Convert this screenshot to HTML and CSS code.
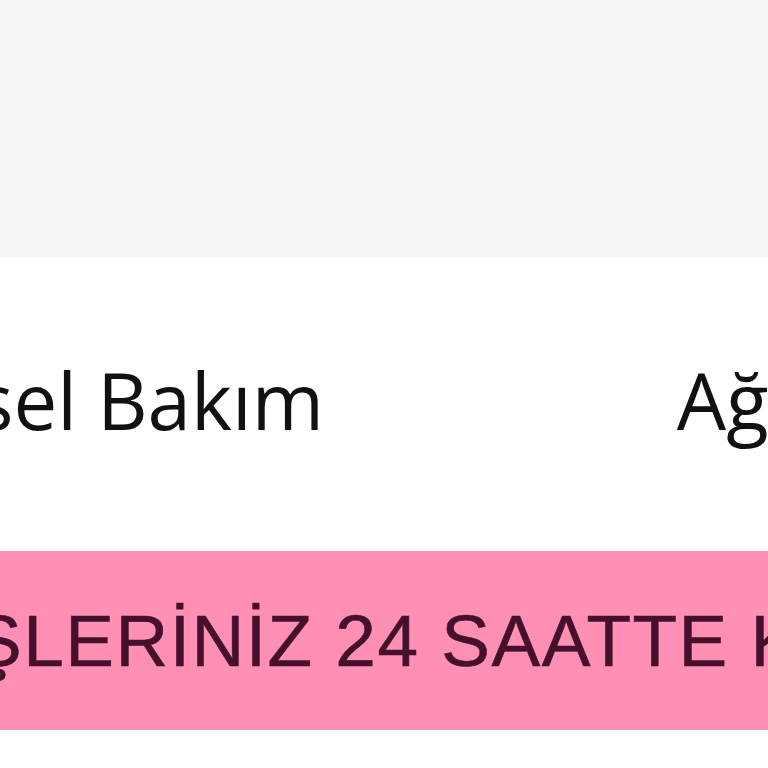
FILE: index.html
```html
<!DOCTYPE html>
<html lang="tr">
<head>
<meta charset="utf-8">
<title>Kişisel Bakım</title>
<link rel="stylesheet" href="styles.css">
</head>
<body>
<header class="topbar"></header>
<nav class="nav">
  <div class="nav-track">
    <a class="nav-item">Kişisel Bakım</a>
    <a class="nav-item">Ağız Bakımı</a>
  </div>
</nav>
<div class="promo">
  <div class="promo-track">SİPARİŞLERİNİZ 24 SAATTE KARGODA</div>
</div>
</body>
</html>
```
FILE: styles.css
```css
html, body {
  margin: 0;
  padding: 0;
  background: #ffffff;
  overflow: hidden;
  height: 768px;
}
.topbar {
  height: 257px;
  background: #f5f5f5;
}
.nav {
  height: 294px;
  display: flex;
  align-items: center;
  overflow: hidden;
  background: #ffffff;
}
.nav-track {
  display: flex;
  gap: 353px;
  margin-left: -148px;
  margin-top: -8px;
  white-space: nowrap;
}
.nav-item {
  font-family: "Open Sans", "Noto Sans", sans-serif;
  font-size: 78px;
  font-weight: 500;
  color: #111111;
  text-decoration: none;
}
.promo {
  height: 179px;
  background: #ff8fb5;
  display: flex;
  align-items: center;
  overflow: hidden;
}
.promo-track {
  font-family: "Liberation Sans", Arial, sans-serif;
  font-size: 73px;
  letter-spacing: 1.5px;
  color: #45102c;
  white-space: nowrap;
  margin-left: -270px;
  -webkit-text-stroke: 0.6px #45102c;
}
```
